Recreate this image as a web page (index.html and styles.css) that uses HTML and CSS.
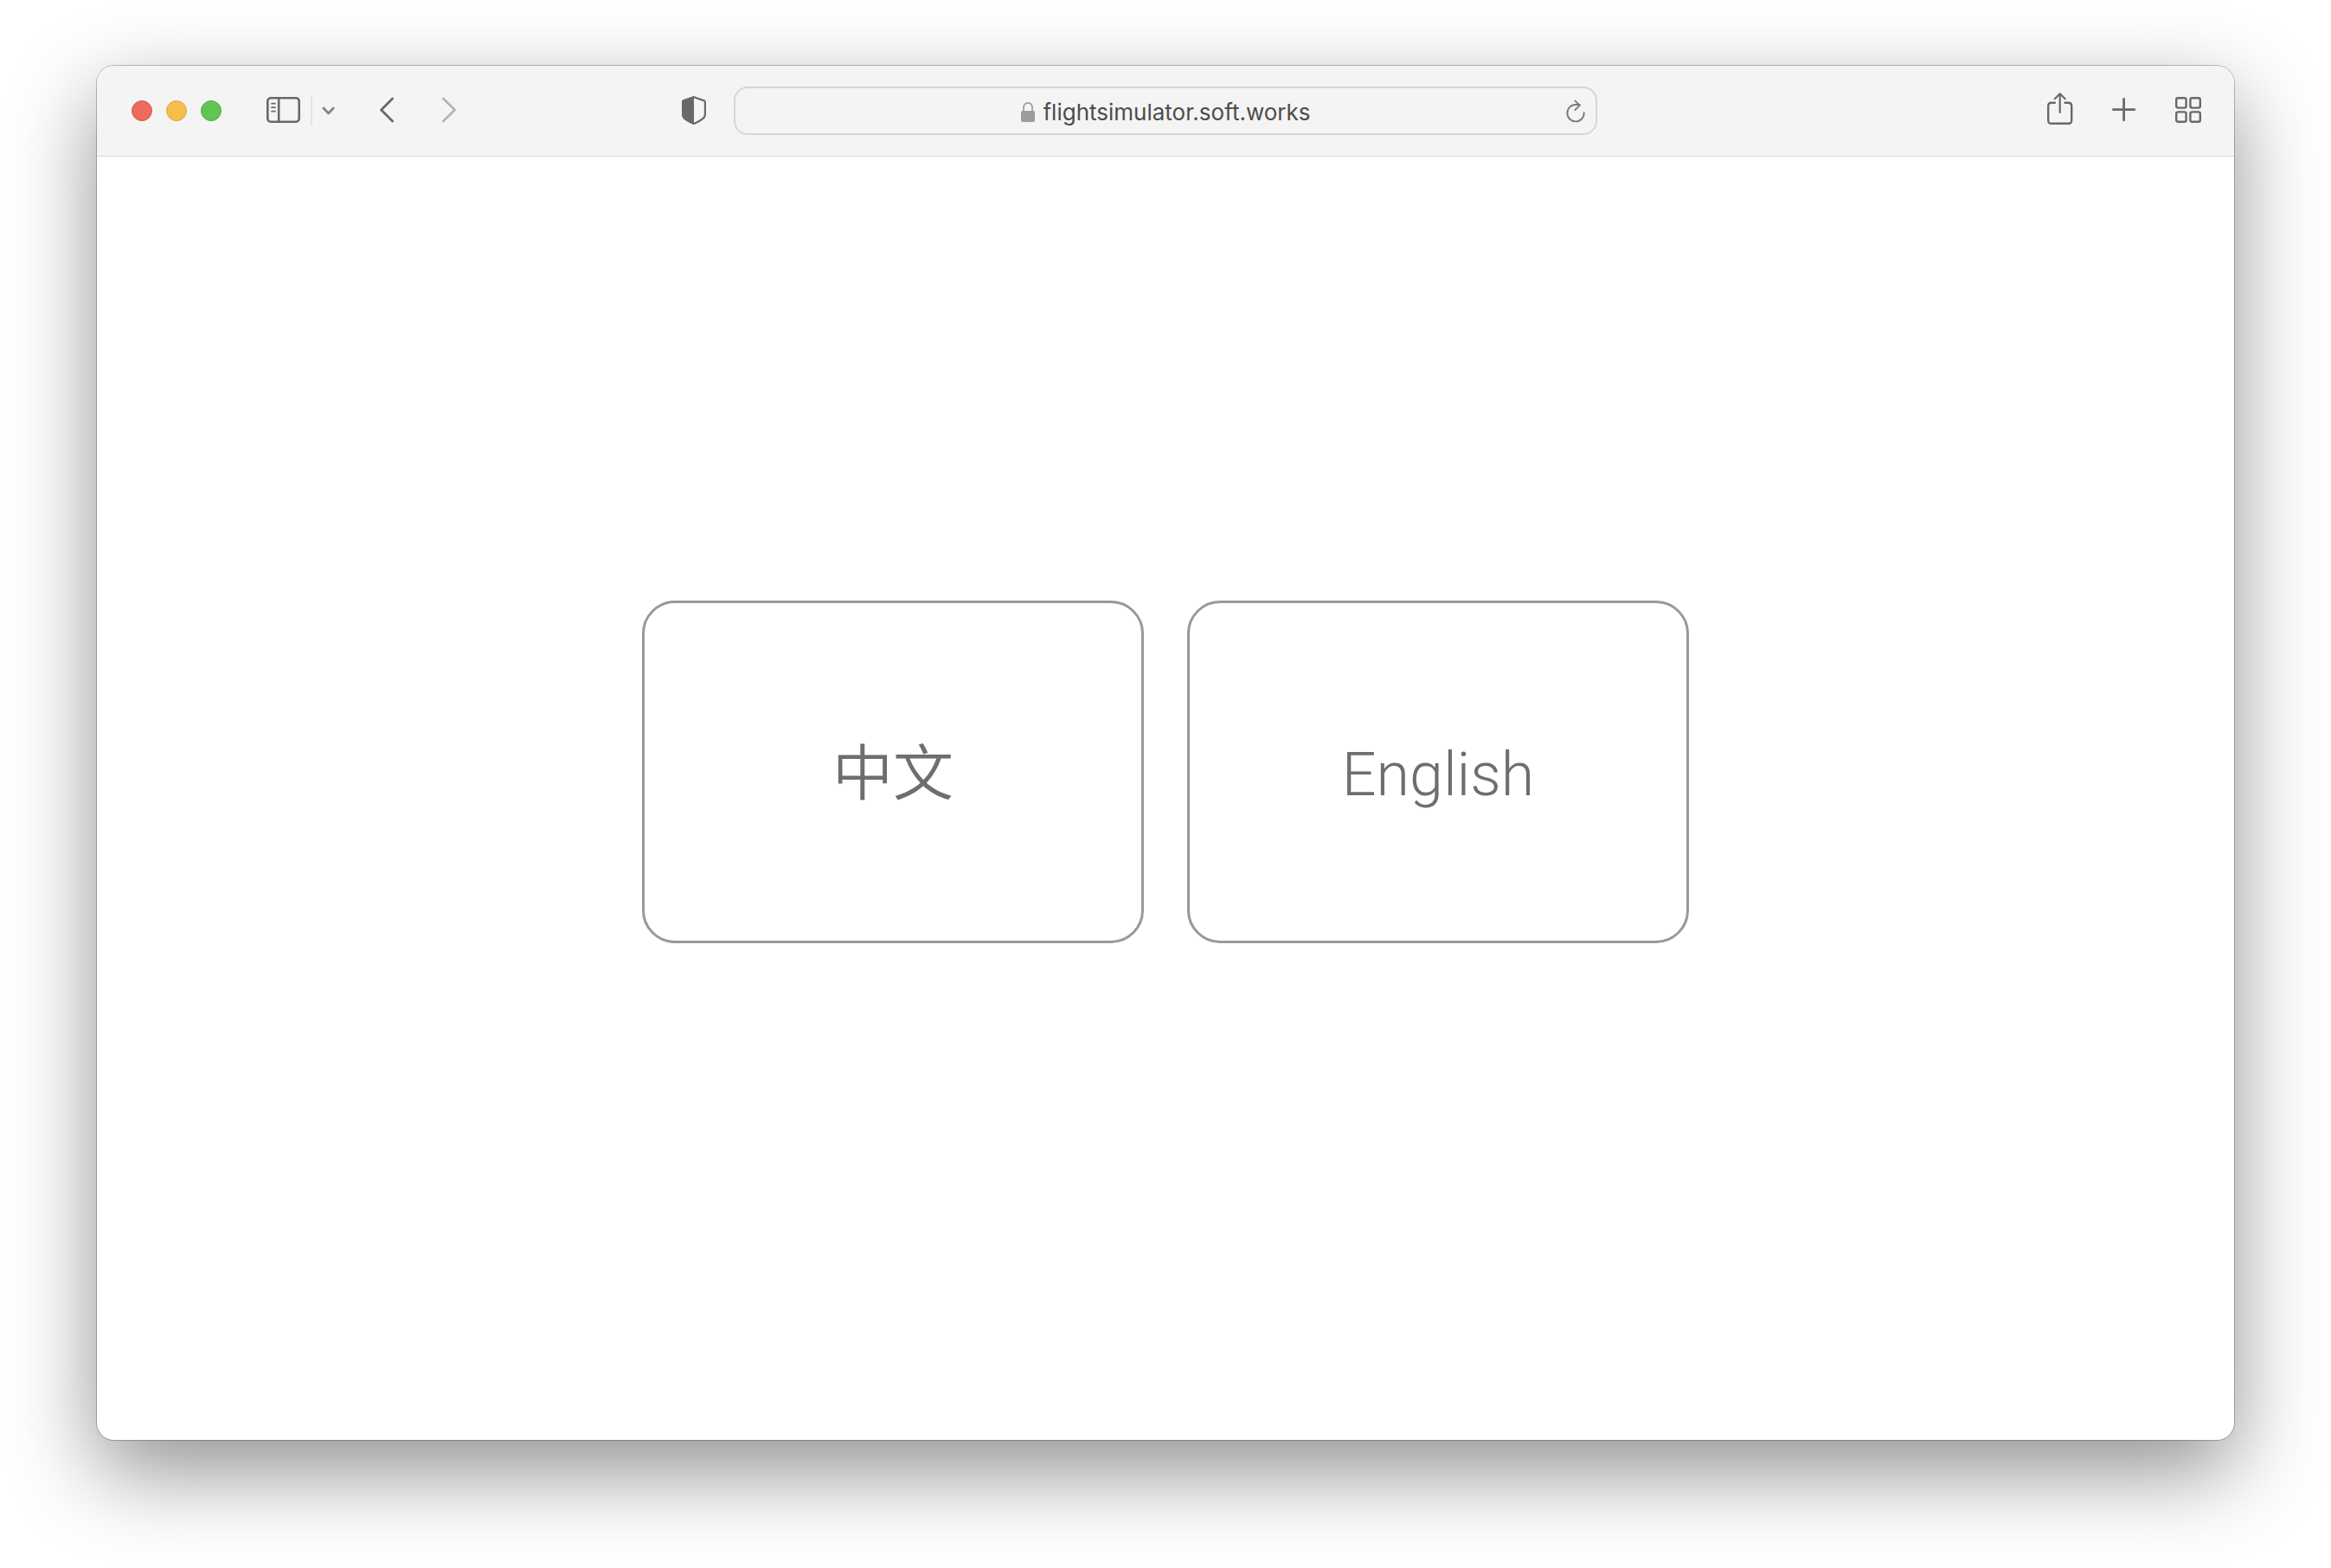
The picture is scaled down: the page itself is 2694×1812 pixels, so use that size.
FILE: index.html
```html
<!DOCTYPE html>
<html lang="en">
<head>
  <meta charset="utf-8">
  <meta name="viewport" content="width=device-width, initial-scale=1">
  <title>flightsimulator.soft.works</title>
  <link rel="stylesheet" href="styles.css">
</head>
<body>
  <div class="window">
    <header class="toolbar">
      <div class="toolbar-start">
        <div class="lights">
          <button class="light light-close" type="button" aria-label="Close"></button>
          <button class="light light-minimize" type="button" aria-label="Minimize"></button>
          <button class="light light-zoom" type="button" aria-label="Zoom"></button>
        </div>
        <div class="sidebar-group">
          <button class="icon-button" type="button" aria-label="Show sidebar">
            <svg width="40" height="44" viewBox="0 0 40 44" fill="none" stroke="currentColor" stroke-width="2.6" stroke-linecap="round">
              <rect x="1.3" y="7.3" width="36.4" height="27.4" rx="3.6"/>
              <path d="M14.2 7.2v27.6"/>
              <path d="M6 13.7h4M6 18.2h4M6 22.7h4" stroke-width="1.7"/>
            </svg>
          </button>
          <span class="divider"></span>
          <button class="icon-button icon-muted" type="button" aria-label="Tab groups">
            <svg width="15" height="44" viewBox="0 0 15 44" fill="none" stroke="currentColor" stroke-width="2.8" stroke-linecap="round" stroke-linejoin="round">
              <path d="M2 19l5.6 6 5.6-6"/>
            </svg>
          </button>
        </div>
        <div class="history">
          <button class="icon-button" type="button" aria-label="Back">
            <svg width="16" height="44" viewBox="0 0 16 44" fill="none" stroke="currentColor" stroke-width="2.8" stroke-linecap="round" stroke-linejoin="round">
              <path d="M14.6 8L1.6 21l13 13"/>
            </svg>
          </button>
          <button class="icon-button icon-disabled" type="button" aria-label="Forward">
            <svg width="16" height="44" viewBox="0 0 16 44" fill="none" stroke="currentColor" stroke-width="2.8" stroke-linecap="round" stroke-linejoin="round">
              <path d="M1.4 8l13.2 13L1.4 34"/>
            </svg>
          </button>
        </div>
        <button class="icon-button privacy" type="button" aria-label="Privacy report">
          <svg width="28" height="44" viewBox="0 0 28 44">
            <path d="M14 6.2l11.8 4.2q1.1.4 1.1 1.6v14q0 2.6-2 4.6Q21 34 14 36.9 7 34 3.1 30.6q-2-2-2-4.6V12q0-1.2 1.1-1.6z" fill="none" stroke="currentColor" stroke-width="2.2" stroke-linejoin="round"/>
            <path d="M14 5L1.6 9.3Q0 10 0 11.8V26q0 3.2 2.4 5.5Q6 34.8 14 38z" fill="currentColor"/>
          </svg>
        </button>
      </div>

      <div class="address">
        <label class="address-main">
          <svg class="lock" width="16" height="44" viewBox="0 0 16 44" aria-hidden="true">
            <rect y="22" width="16" height="13" rx="2" fill="currentColor"/>
            <path d="M3 22.5v-4.5a5 5.2 0 0 1 10 0v4.5" fill="none" stroke="currentColor" stroke-width="1.7"/>
          </svg>
          <input class="address-input" type="text" value="flightsimulator.soft.works" aria-label="Address">
        </label>
        <button class="icon-button reload" type="button" aria-label="Reload">
          <svg width="22" height="44" viewBox="0 0 22 44" fill="none" stroke="currentColor" stroke-width="1.9" stroke-linecap="round" stroke-linejoin="round">
            <path d="M20.7 24.2a9.7 9.7 0 1 1-9.7-9.2h4.6"/>
            <path d="M10.4 10.6l5.4 5-5.4 5.4"/>
          </svg>
        </button>
      </div>

      <div class="toolbar-end">
        <button class="icon-button" type="button" aria-label="Share">
          <svg width="30" height="44" viewBox="0 0 30 44" fill="none" stroke="currentColor" stroke-width="2.4" stroke-linecap="round" stroke-linejoin="round">
            <path d="M9.8 12.8H5q-3.8 0-3.8 3.8v16.4q0 3.8 3.8 3.8h19.4q3.8 0 3.8-3.8V16.6q0-3.8-3.8-3.8h-4.8" stroke-linecap="butt"/>
            <path d="M14.7 24V2.5M8.7 8.2l6-6 6 6" stroke-width="2.2"/>
          </svg>
        </button>
        <button class="icon-button" type="button" aria-label="New tab">
          <svg width="28" height="44" viewBox="0 0 28 44" fill="none" stroke="currentColor" stroke-width="2.8" stroke-linecap="round">
            <path d="M13 8.4v24.4M.8 20.6h24.4" transform="translate(.6 0)"/>
          </svg>
        </button>
        <button class="icon-button" type="button" aria-label="Tab overview">
          <svg width="30" height="44" viewBox="0 0 30 44" fill="none" stroke="currentColor" stroke-width="2.4">
            <rect x="1.2" y="7.2" width="11.4" height="11.4" rx="2"/>
            <rect x="17.4" y="7.2" width="11.4" height="11.4" rx="2"/>
            <rect x="1.2" y="23.4" width="11.4" height="11.4" rx="2"/>
            <rect x="17.4" y="23.4" width="11.4" height="11.4" rx="2"/>
          </svg>
        </button>
      </div>
    </header>

    <main class="page">
      <a class="card" href="#zh" lang="zh">中文</a>
      <a class="card" href="#en">English</a>
    </main>
  </div>
</body>
</html>
```

FILE: styles.css
```css
* {
  box-sizing: border-box;
}

body {
  margin: 0;
  min-height: 100vh;
  padding: 76px 112px 148px;
  display: flex;
  background: #fff;
  font-family: Inter, "Noto Sans CJK SC", sans-serif;
}

.window {
  flex: 1;
  min-width: 0;
  display: flex;
  flex-direction: column;
  overflow: hidden;
  background: #fff;
  border-radius: 20px;
  box-shadow:
    0 0 0 1px rgba(0, 0, 0, 0.24),
    0 36px 100px rgba(0, 0, 0, 0.44);
}

.toolbar {
  display: grid;
  grid-template-columns: minmax(0, 1fr) minmax(0, 998px) minmax(0, 1fr);
  align-items: center;
  padding: 24px 38px;
  background: #f4f4f4;
  border-bottom: 1px solid #d8d8d8;
}

.toolbar-start,
.toolbar-end,
.lights,
.sidebar-group,
.history,
.address-main {
  display: flex;
  align-items: center;
}

.toolbar-start {
  gap: 52px;
  padding: 0 32px 0 2px;
}

.toolbar-end {
  justify-content: flex-end;
  gap: 45px;
}

.lights {
  gap: 16px;
}

.light {
  width: 24px;
  height: 24px;
  padding: 0;
  border: 1px solid;
  border-radius: 50%;
}

.light-close {
  background: #ed6a5e;
  border-color: #d65a4f;
}

.light-minimize {
  background: #f5bf4f;
  border-color: #d9a440;
}

.light-zoom {
  background: #61c554;
  border-color: #52ab44;
}

.icon-button {
  display: block;
  padding: 0;
  border: 0;
  background: none;
  color: #696969;
}

.icon-button svg,
.lock {
  display: block;
}

.icon-muted {
  color: #86868a;
}

.icon-disabled {
  color: #b5b5b5;
}

.sidebar-group {
  gap: 11px;
}

.divider {
  width: 2px;
  height: 36px;
  background: #e4e4e4;
}

.history {
  gap: 56px;
}

.privacy {
  margin-left: auto;
}

.address {
  display: grid;
  grid-template-columns: 1fr auto 1fr;
  align-items: center;
  height: 56px;
  padding: 0 12px;
  border: 2px solid #d6d6d6;
  border-radius: 16px;
}

.address-main {
  grid-column: 2;
  gap: 10px;
}

.lock {
  color: #9c9c9c;
}

.address-input {
  field-sizing: content;
  padding: 4px 0 0;
  border: 0;
  outline: 0;
  background: none;
  color: #4c4c4c;
  font: 400 26px/32px Inter, sans-serif;
}

.reload {
  justify-self: end;
  color: #7a7a7a;
}

.page {
  flex: 1;
  display: flex;
  justify-content: center;
  align-items: center;
  gap: 50px;
  padding: 0 24px 62px;
}

.card {
  display: flex;
  justify-content: center;
  align-items: center;
  width: 580px;
  height: 396px;
  padding-top: 6px;
  border: 3px solid #999;
  border-radius: 38px;
  color: #6e6e6e;
  font: 350 70px/84px Roboto, "Noto Sans CJK SC", sans-serif;
  text-decoration: none;
}
```
